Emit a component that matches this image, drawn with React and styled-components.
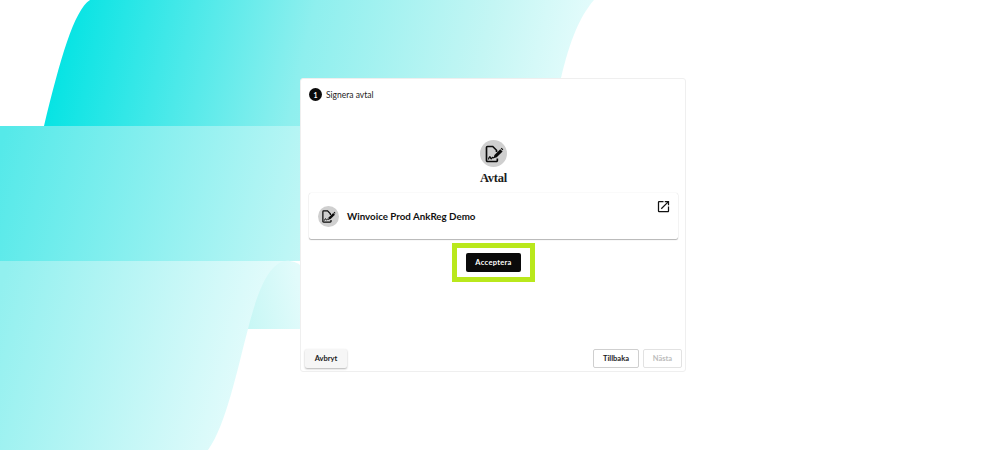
import React from "react";
import styled, { createGlobalStyle } from "styled-components";
import { MdOpenInNew } from "react-icons/md";

const GlobalStyle = createGlobalStyle`
  html, body {
    margin: 0;
    padding: 0;
    background: #fff;
    font-family: "Lato", "Liberation Sans", sans-serif;
  }
`;

const Page = styled.div`
  position: relative;
  box-sizing: border-box;
  width: 998px;
  height: 450px;
  padding: 78px 0 0 300px;
  overflow: hidden;
`;

const Waves = styled.svg`
  position: absolute;
  top: 0;
  left: 0;
`;

const Card = styled.div`
  position: relative;
  box-sizing: border-box;
  width: 386px;
  height: 294px;
  display: flex;
  flex-direction: column;
  background: #fff;
  border: 1px solid #efefef;
  border-radius: 3px;
  padding: 0 3px 3px 4px;
`;

const StepRow = styled.div`
  display: flex;
  align-items: center;
  gap: 4px;
  padding: 9px 0 0 4px;
  font-size: 8.5px;
  color: #222;
`;

const StepDot = styled.span`
  width: 13px;
  height: 13px;
  border-radius: 50%;
  background: #0b0b0b;
  color: #fff;
  font-size: 7px;
  font-weight: 700;
  display: flex;
  align-items: center;
  justify-content: center;
`;

const Hero = styled.div`
  display: flex;
  flex-direction: column;
  align-items: center;
  margin-top: 39px;
`;

const IconCircle = styled.span`
  width: ${(props) => props.size}px;
  height: ${(props) => props.size}px;
  border-radius: 50%;
  background: #cfcfcf;
  display: flex;
  align-items: center;
  justify-content: center;
  flex: none;
`;

const Title = styled.h1`
  margin: 3px 0 0;
  font-family: "Liberation Serif", serif;
  font-size: 12.5px;
  line-height: 16px;
  font-weight: 700;
  letter-spacing: -0.2px;
  color: #1c1c1c;
`;

const DocRow = styled.div`
  position: relative;
  box-sizing: border-box;
  height: 46px;
  margin: 7px 4px 0;
  padding-left: 9px;
  display: flex;
  align-items: center;
  gap: 8px;
  background: #fff;
  border-radius: 2px;
  box-shadow: 0 0 1px rgba(0, 0, 0, 0.2), 0 1px 1px rgba(0, 0, 0, 0.28);
`;

const DocName = styled.span`
  font-size: 9.75px;
  font-weight: 700;
  color: #111;
`;

const OpenLink = styled.span`
  position: absolute;
  top: 6px;
  right: 7px;
  display: flex;
  color: #111;
`;

const Highlight = styled.div`
  box-sizing: border-box;
  align-self: center;
  width: 83px;
  height: 39px;
  margin-top: 4px;
  border: 5px solid #b9e81c;
  display: flex;
  align-items: center;
  justify-content: center;
`;

const AcceptButton = styled.button`
  width: 55px;
  height: 19px;
  padding: 0;
  border: none;
  border-radius: 2px;
  background: #0a0a0a;
  color: #fff;
  font-family: inherit;
  font-size: 7.5px;
  font-weight: 700;
  letter-spacing: 0.3px;
`;

const Footer = styled.div`
  margin-top: auto;
  display: flex;
  align-items: center;
  gap: 4px;
`;

const FooterButton = styled.button`
  box-sizing: border-box;
  width: ${(props) => props.width}px;
  height: 19px;
  padding: 0;
  border-radius: 2px;
  font-family: inherit;
  font-size: 7.5px;
  font-weight: 700;
  background: ${(props) => (props.plain ? "#f6f6f6" : "#fff")};
  color: ${(props) => (props.disabled ? "#bcbcbc" : "#1a1a1a")};
  border: ${(props) =>
    props.plain ? "none" : `1px solid ${props.disabled ? "#e2e2e2" : "#cfcfcf"}`};
  box-shadow: ${(props) => (props.plain ? "0 1px 2px rgba(0, 0, 0, 0.3)" : "none")};
`;

const Spacer = styled.span`
  flex: 1;
`;

// document with a signature squiggle and a pen over its corner
const ContractIcon = ({ size }) => (
  <svg width={size} height={size} viewBox="0 0 24 24" fill="none">
    <path
      d="M15 9.500V7.500L10.500 3H4.200A1.200 1.200 0 0 0 3 4.200V19.800A1.200 1.200 0 0 0 4.200 21H14.800A1.200 1.200 0 0 0 16 19.800V17.500"
      stroke="#0b0b0b"
      strokeWidth="2"
    />
    <path
      d="M5.500 18c1-3.200 1.800-3.400 2.300-1.400.4 1.500 1 1.500 1.700.3.500-.9 1.100-1 2.100-.4"
      stroke="#0b0b0b"
      strokeWidth="1.500"
      strokeLinecap="round"
    />
    <path d="M11.500 17l1-3.800 7-7 2.800 2.800-7 7z" fill="#0b0b0b" />
    <path d="M20.200 5.500l1-1 2 2-1 1z" fill="#0b0b0b" />
  </svg>
);

const App = () => {
  return (
    <>
      <GlobalStyle />
      <Page>
        <Waves width="998" height="450" viewBox="0 0 998 450">
          <defs>
            <linearGradient id="top" gradientUnits="userSpaceOnUse" x1="45" y1="70" x2="560" y2="190">
              <stop offset="0" stopColor="#00e3e3" />
              <stop offset="0.25" stopColor="#4ce9e9" />
              <stop offset="0.47" stopColor="#8eefee" />
              <stop offset="0.8" stopColor="#c4f6f4" />
              <stop offset="1" stopColor="#e6fcfc" />
            </linearGradient>
            <linearGradient id="mid" gradientUnits="userSpaceOnUse" x1="0" y1="150" x2="340" y2="240">
              <stop offset="0" stopColor="#55e9e9" />
              <stop offset="1" stopColor="#cdf8f7" />
            </linearGradient>
            <linearGradient id="low" gradientUnits="userSpaceOnUse" x1="0" y1="290" x2="270" y2="362">
              <stop offset="0" stopColor="#92f0ef" />
              <stop offset="1" stopColor="#e8fcfc" />
            </linearGradient>
            <linearGradient id="tail" gradientUnits="userSpaceOnUse" x1="245" y1="300" x2="300" y2="290">
              <stop offset="0" stopColor="#c8f7f5" />
              <stop offset="1" stopColor="#e2fbfb" />
            </linearGradient>
          </defs>
          <path
            d="M90 0 C74 10 60 60 44 126 L300 126 L561 126 L561 78 C570 40 580 16 594 0 Z"
            fill="url(#top)"
          />
          <path d="M0 126 H340 V261 H0 Z" fill="url(#mid)" />
          <path d="M230 261 H290 Q300 262 304 270 V329 H248 Z" fill="url(#tail)" />
          <path
            d="M0 261 H290 C268 258 256 298 248 329 C238 366 226 426 208 450 H0 Z"
            fill="url(#low)"
          />
        </Waves>
        <Card>
          <StepRow>
            <StepDot>1</StepDot>
            Signera avtal
          </StepRow>
          <Hero>
            <IconCircle size={27}>
              <ContractIcon size={20} />
            </IconCircle>
            <Title>Avtal</Title>
          </Hero>
          <DocRow>
            <IconCircle size={21}>
              <ContractIcon size={15} />
            </IconCircle>
            <DocName>Winvoice Prod AnkReg Demo</DocName>
            <OpenLink>
              <MdOpenInNew size={15} />
            </OpenLink>
          </DocRow>
          <Highlight>
            <AcceptButton>Acceptera</AcceptButton>
          </Highlight>
          <Footer>
            <FooterButton plain width={42}>Avbryt</FooterButton>
            <Spacer />
            <FooterButton width={46}>Tillbaka</FooterButton>
            <FooterButton disabled width={39}>Nästa</FooterButton>
          </Footer>
        </Card>
      </Page>
    </>
  );
};

export default App;
